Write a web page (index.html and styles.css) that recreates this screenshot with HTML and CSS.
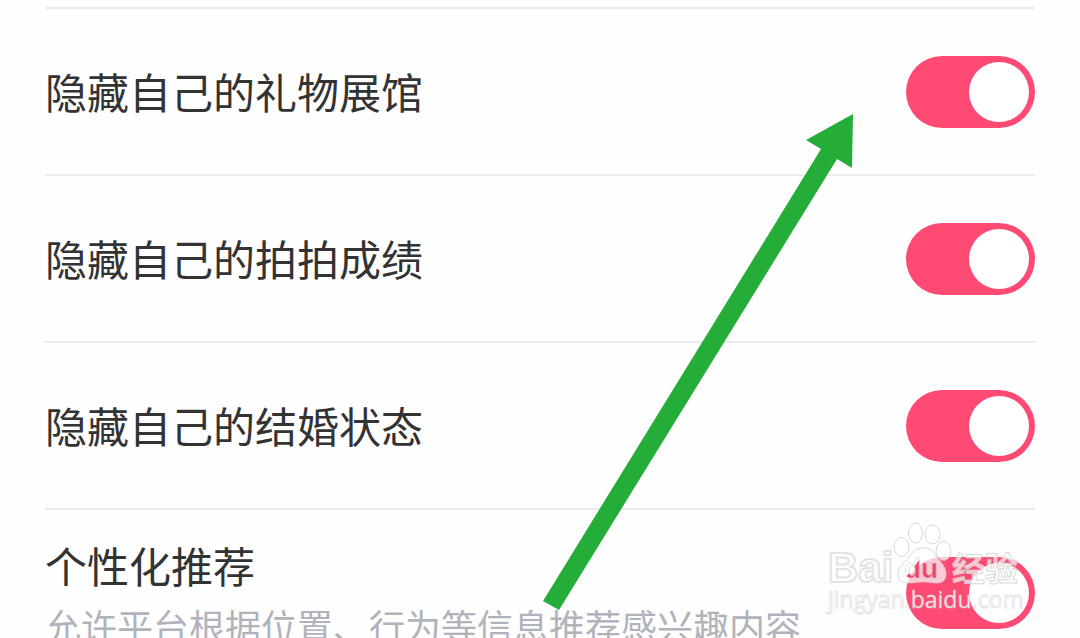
FILE: index.html
```html
<!DOCTYPE html>
<html lang="zh-CN">
<head>
<meta charset="utf-8">
<meta name="viewport" content="width=device-width, initial-scale=1">
<title>隐私设置</title>
<link rel="stylesheet" href="styles.css">
</head>
<body>
<main class="screen">
  <div class="settings">
    <label class="row">
      <span class="title">隐藏自己的礼物展馆</span>
      <input class="switch" type="checkbox" role="switch" checked>
    </label>
    <label class="row">
      <span class="title">隐藏自己的拍拍成绩</span>
      <input class="switch" type="checkbox" role="switch" checked>
    </label>
    <label class="row">
      <span class="title">隐藏自己的结婚状态</span>
      <input class="switch" type="checkbox" role="switch" checked>
    </label>
    <label class="row">
      <span class="text">
        <span class="title">个性化推荐</span>
        <span class="note">允许平台根据位置、行为等信息推荐感兴趣内容</span>
      </span>
      <input class="switch" type="checkbox" role="switch" checked>
    </label>
  </div>
  <svg class="arrow" viewBox="0 0 310 496" aria-hidden="true">
    <path d="M310 0 263 26 278 35 0 487 16 496 294 45 309 54Z"/>
  </svg>
  <svg class="watermark" viewBox="0 0 200 96" aria-hidden="true">
    <defs>
      <linearGradient id="du-fill" gradientUnits="userSpaceOnUse" x1="83" y1="44" x2="93" y2="52">
        <stop offset="0.5" stop-color="#fefefe"/>
        <stop offset="0.5" stop-color="#f0446c"/>
      </linearGradient>
    </defs>
    <g class="mark">
      <text class="brand" x="3" y="62">Bai</text>
      <ellipse cx="76.500" cy="27" rx="7.500" ry="9.500"/>
      <ellipse cx="90.500" cy="13" rx="7" ry="10"/>
      <ellipse cx="107.500" cy="14.500" rx="7.500" ry="9.500"/>
      <ellipse cx="118.500" cy="31" rx="7.500" ry="9.500"/>
      <path d="M98 28C91 28 87 32 84 37C80 43 73 46 73 54C73 60 77 63 84 63C90 63 93 62 98 62C103 62 106 63 112 63C118 63 121 60 121 54C121 46 116 43 112 37C109 32 105 28 98 28Z"/>
      <text class="cjk" x="127" y="61">经验</text>
      <text class="site" x="3" y="88">jingyan.baidu.com</text>
    </g>
    <text class="du" x="79" y="58">du</text>
  </svg>
</main>
</body>
</html>
```
FILE: styles.css
```css
* {
  box-sizing: border-box;
}

body {
  margin: 0;
  background: #fefefe;
  font-family: "Noto Sans CJK SC", sans-serif;
}

.screen {
  position: relative;
  height: 100vh;
  overflow: hidden;
}

.settings {
  padding: 7px 45px 0;
}

.row {
  display: flex;
  align-items: center;
  justify-content: space-between;
  min-height: 167px;
  border-top: 2px solid #ebebeb;
}

.text {
  display: flex;
  flex-direction: column;
  padding-top: 4px;
}

.title {
  padding-bottom: 2px;
  color: #333;
  font-size: 42px;
  line-height: 58px;
}

.note {
  color: #b1b3bc;
  font-size: 36px;
  line-height: 58px;
}

.switch {
  appearance: none;
  flex: none;
  display: flex;
  justify-content: flex-end;
  width: 129px;
  height: 72px;
  margin: 0;
  padding: 6px;
  border-radius: 36px;
  background: #ff4a73;
}

.switch::before {
  content: "";
  width: 60px;
  height: 60px;
  border-radius: 50%;
  background: #fff;
}

.switch:not(:checked) {
  justify-content: flex-start;
  background: #ddd;
}

.arrow {
  position: absolute;
  top: 114px;
  left: 543px;
  width: 310px;
  height: 496px;
  fill: #24ad39;
  pointer-events: none;
}

.watermark {
  position: absolute;
  right: 55px;
  bottom: 22px;
  width: 200px;
  height: 96px;
  pointer-events: none;
}

.mark {
  fill: #fff;
  fill-opacity: 0.7;
  stroke: #c8c8c8;
  stroke-opacity: 0.7;
  stroke-width: 1px;
}

.brand {
  font: bold 42px "Liberation Sans", sans-serif;
  stroke-width: 2px;
  stroke-opacity: 0.5;
}

.cjk {
  font: bold 33px "Noto Sans CJK SC", sans-serif;
}

.site {
  font: 23px "Open Sans", sans-serif;
  fill-opacity: 0.9;
  stroke-opacity: 0.5;
}

.du {
  fill: url(#du-fill);
  stroke: #ccc;
  stroke-opacity: 0.5;
  font: bold 28px "Liberation Sans", sans-serif;
}
```
